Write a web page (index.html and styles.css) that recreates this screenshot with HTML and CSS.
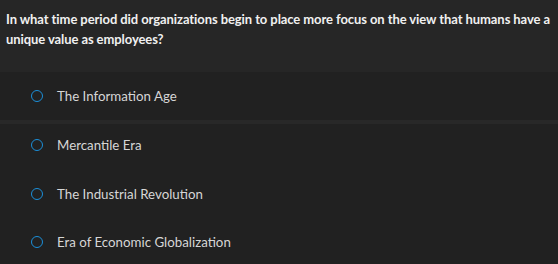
FILE: index.html
```html
<!DOCTYPE html>
<html lang="en">
<head>
  <meta charset="UTF-8">
  <title>Question</title>
  <link rel="stylesheet" href="styles.css">
</head>
<body>
  <div class="question">
    <p>In what time period did organizations begin to place more focus on the view that humans have a unique value as employees?</p>
  </div>

  <div class="options">
    <label class="option"><span class="radio"></span>The Information Age</label>
    <label class="option band"><span class="radio"></span>Mercantile Era</label>
    <label class="option"><span class="radio"></span>The Industrial Revolution</label>
    <label class="option"><span class="radio"></span>Era of Economic Globalization</label>
  </div>
</body>
</html>
```

FILE: styles.css
```css
body {
  margin: 0;
  background: #212121;
  font-family: Lato, Arial, sans-serif;
  color: #e6e6e6;
  height: 264px;
  overflow: hidden;
}
.question {
  background: #262626;
  height: 72px;
  box-sizing: border-box;
  padding: 9px 0 0 6px;
}
.question p {
  margin: 0;
  font-size: 13px;
  font-weight: 700;
  letter-spacing: -0.08px;
  line-height: 20px;
  color: #f0f0f0;
}
.options {
  display: flex;
  flex-direction: column;
}
.option {
  display: flex;
  align-items: center;
  height: 48px;
  padding-left: 31px;
  padding-bottom: 1px;
  box-sizing: border-box;
  font-size: 13.3px;
  color: #d6d6d6;
}
.option.band {
  border-top: 4px solid #282828;
  height: 50px;
  padding-bottom: 5px;
}
.radio {
  width: 10px;
  height: 10px;
  border: 1.6px solid #1b8fd9;
  border-radius: 50%;
  margin-right: 14px;
  flex-shrink: 0;
}
```
